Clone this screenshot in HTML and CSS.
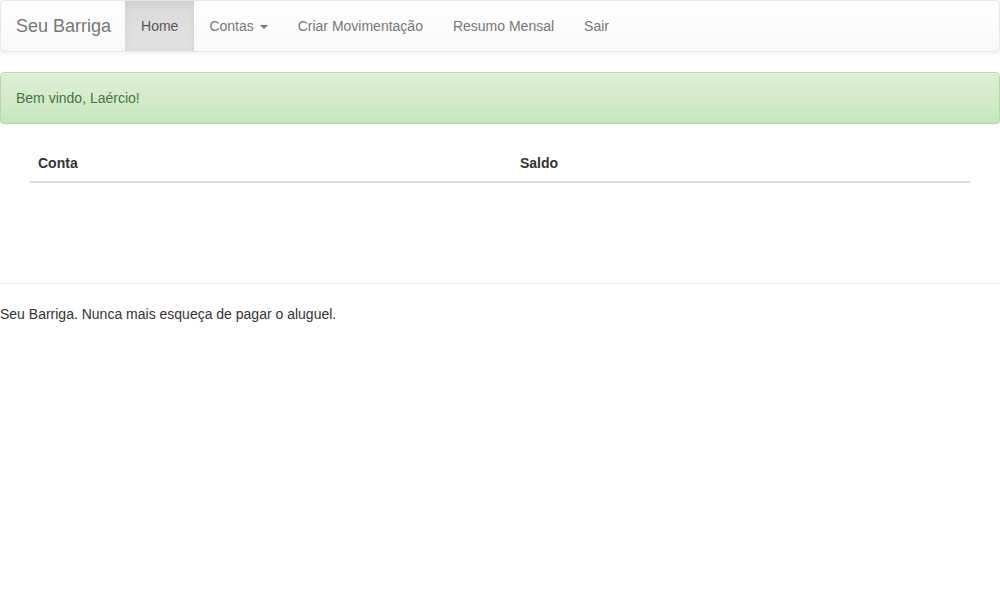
FILE: index.html
```html
<!DOCTYPE html>
<html lang="pt">
<head>
<meta charset="utf-8">
<title>Seu Barriga</title>
<link rel="stylesheet" href="styles.css">
</head>
<body>
<nav class="navbar">
  <a class="brand" href="#">Seu Barriga</a>
  <ul class="nav">
    <li class="active"><a href="#">Home</a></li>
    <li><a href="#">Contas <span class="caret"></span></a></li>
    <li><a href="#">Criar Movimentação</a></li>
    <li><a href="#">Resumo Mensal</a></li>
    <li><a href="#">Sair</a></li>
  </ul>
</nav>
<div class="alert">Bem vindo, Laércio!</div>
<div class="content">
  <table class="table">
    <thead>
      <tr><th class="col-conta">Conta</th><th>Saldo</th></tr>
    </thead>
    <tbody></tbody>
  </table>
</div>
<hr class="sep">
<footer class="footer">Seu Barriga. Nunca mais esqueça de pagar o aluguel.</footer>
</body>
</html>
```

FILE: styles.css
```css
* { box-sizing: border-box; }
html, body { margin: 0; padding: 0; }
body {
  font-family: "Liberation Sans", Arial, sans-serif;
  font-size: 14px;
  line-height: 20px;
  color: #333;
  background: #fff;
}
.navbar {
  display: flex;
  align-items: stretch;
  height: 52px;
  border: 1px solid #e7e7e7;
  border-radius: 4px;
  background-image: linear-gradient(to bottom, #fff 0%, #f8f8f8 100%);
  box-shadow: inset 0 1px 0 rgba(255,255,255,.15), 0 1px 5px rgba(0,0,0,.075);
  margin-bottom: 20px;
}
.brand {
  padding: 15px 14px 15px 15px;
  font-size: 18px;
  line-height: 20px;
  color: #777;
  text-decoration: none;
  text-shadow: 0 1px 0 rgba(255,255,255,.25);
}
.nav {
  display: flex;
  list-style: none;
  margin: 0;
  padding: 0;
}
.nav li a {
  display: block;
  padding: 15px;
  line-height: 20px;
  color: #777;
  text-decoration: none;
  text-shadow: 0 1px 0 rgba(255,255,255,.25);
}
.nav li.active a {
  padding: 15px 16px;
  color: #555;
  background-image: linear-gradient(to bottom, #dbdbdb 0%, #e2e2e2 100%);
  box-shadow: inset 0 3px 9px rgba(0,0,0,.075);
}
.caret {
  display: inline-block;
  width: 0;
  height: 0;
  margin-left: 2px;
  vertical-align: middle;
  border-top: 4px solid #777;
  border-right: 4px solid transparent;
  border-left: 4px solid transparent;
}
.alert {
  padding: 15px;
  border: 1px solid #b2dba1;
  border-radius: 4px;
  color: #3c763d;
  background-image: linear-gradient(to bottom, #dff0d8 0%, #c8e5bc 100%);
  box-shadow: inset 0 1px 0 rgba(255,255,255,.25), 0 1px 2px rgba(0,0,0,.05);
  text-shadow: 0 1px 0 rgba(255,255,255,.2);
  margin-bottom: 20px;
}
.content {
  padding: 1px 30px 0;
  min-height: 139px;
}
.table {
  width: 100%;
  border-collapse: collapse;
  margin-bottom: 20px;
}
.table th {
  text-align: left;
  font-weight: bold;
  padding: 8px;
  line-height: 20px;
  border-bottom: 2px solid #ddd;
}
.table th.col-conta { width: 482px; }
.sep {
  margin: 0 0 20px;
  border: 0;
  border-top: 1px solid #eee;
}
.footer {
  line-height: 20px;
}
```
